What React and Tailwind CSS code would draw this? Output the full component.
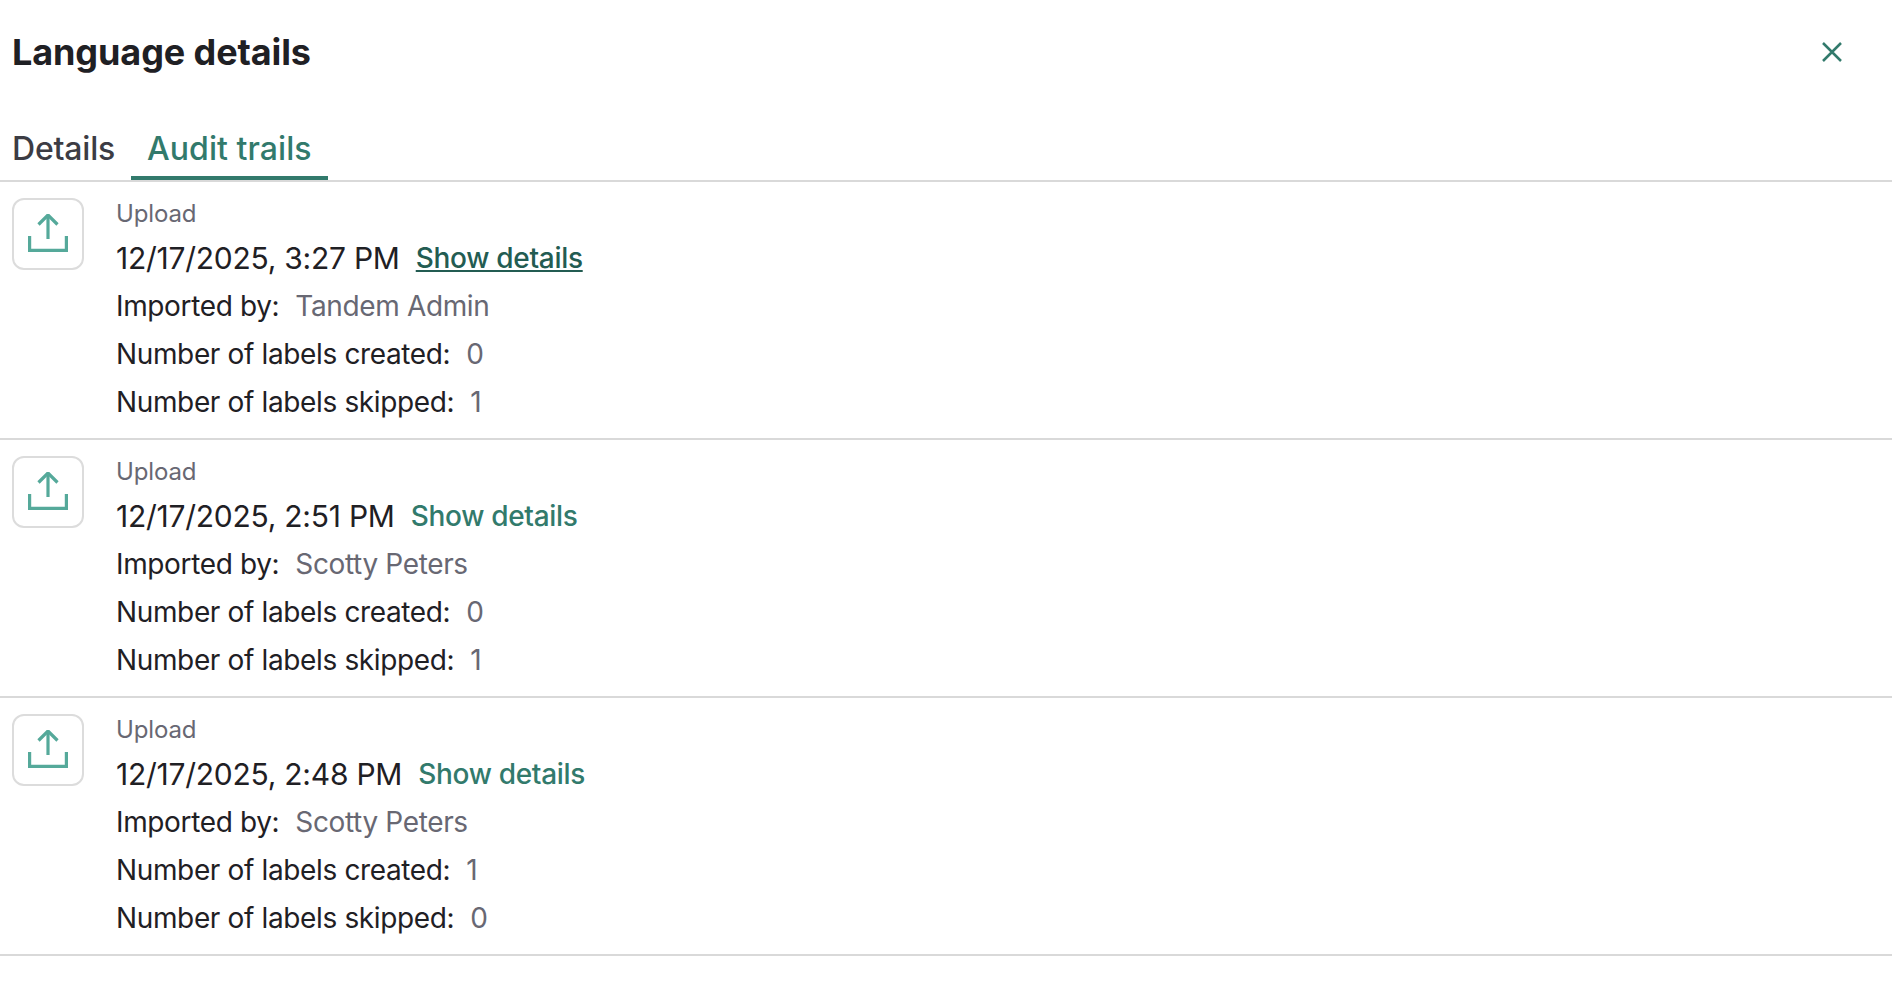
import React from "react";

const entries = [
  { time: "12/17/2025, 3:27 PM", by: "Tandem Admin", created: "0", skipped: "1", hovered: true },
  { time: "12/17/2025, 2:51 PM", by: "Scotty Peters", created: "0", skipped: "1" },
  { time: "12/17/2025, 2:48 PM", by: "Scotty Peters", created: "1", skipped: "0" },
];

const UploadIcon = () => (
  <svg width="40" height="40" viewBox="0 1 40 40" fill="none" stroke="#55a99a" strokeWidth="3.2">
    <path d="M20 26V2" />
    <path d="M10.5 11.5L20 2l9.5 9.5" />
    <path d="M1.6 23v14.4h36.8V23" />
  </svg>
);

const Row = ({ label, value }) => (
  <div className="flex items-center h-12 text-[28px] leading-none tracking-[-0.36px] text-[#1f2024]">
    <span>{label}</span>
    <span className="ml-4 text-[#686873]">{value}</span>
  </div>
);

const AuditEntry = ({ time, by, created, skipped, hovered }) => (
  <div className="flex h-[258px] pl-3 pt-4 border-b-2 border-[#d9d9d9]">
    <div className="flex items-center justify-center w-[72px] h-[72px] border-2 border-[#dcdcdc] rounded-xl">
      <UploadIcon />
    </div>
    <div className="ml-8 flex flex-col">
      <div className="h-8 flex items-center text-2xl leading-none tracking-[-0.15px] text-[#686873]">Upload</div>
      <div className="flex items-center h-[52px] pt-1">
        <span className="text-[30px] leading-none tracking-[-0.25px] text-[#1f2024]">{time}</span>
        <a className={hovered ? "ml-4 text-[28px] leading-none font-medium tracking-[-0.3px] text-[#235c52] underline" : "ml-4 text-[28px] leading-none font-medium tracking-[-0.3px] text-[#327a6c]"}>
          Show details
        </a>
      </div>
      <Row label="Imported by:" value={by} />
      <Row label="Number of labels created:" value={created} />
      <Row label="Number of labels skipped:" value={skipped} />
    </div>
  </div>
);

export default function App() {
  return (
    <div className="min-h-screen bg-white font-['Inter',sans-serif]">
      <div className="flex items-center justify-between h-[104px] pl-3 pr-[50px]">
        <h1 className="text-4xl font-bold tracking-[-0.1px] text-[#1f2024]">Language details</h1>
        <svg width="20" height="20" viewBox="0 0 20 20" fill="none" stroke="#327a6c" strokeWidth="2.5">
          <path d="M1 1l18 18M19 1L1 19" />
        </svg>
      </div>
      <div className="flex h-[78px] pl-3 border-b-2 border-[#d9d9d9] text-[32px] leading-none font-medium">
        <div className="flex items-center h-[76px] pt-[13px] tracking-[-0.2px] text-[#3c3c44] mr-4">Details</div>
        <div className="flex items-center h-[76px] px-[16px] pt-[17px] tracking-[0.05px] text-[#327a6c] border-b-4 border-[#327a6c]">Audit trails</div>
      </div>
      {entries.map((entry, i) => (
        <AuditEntry key={i} {...entry} />
      ))}
    </div>
  );
}
